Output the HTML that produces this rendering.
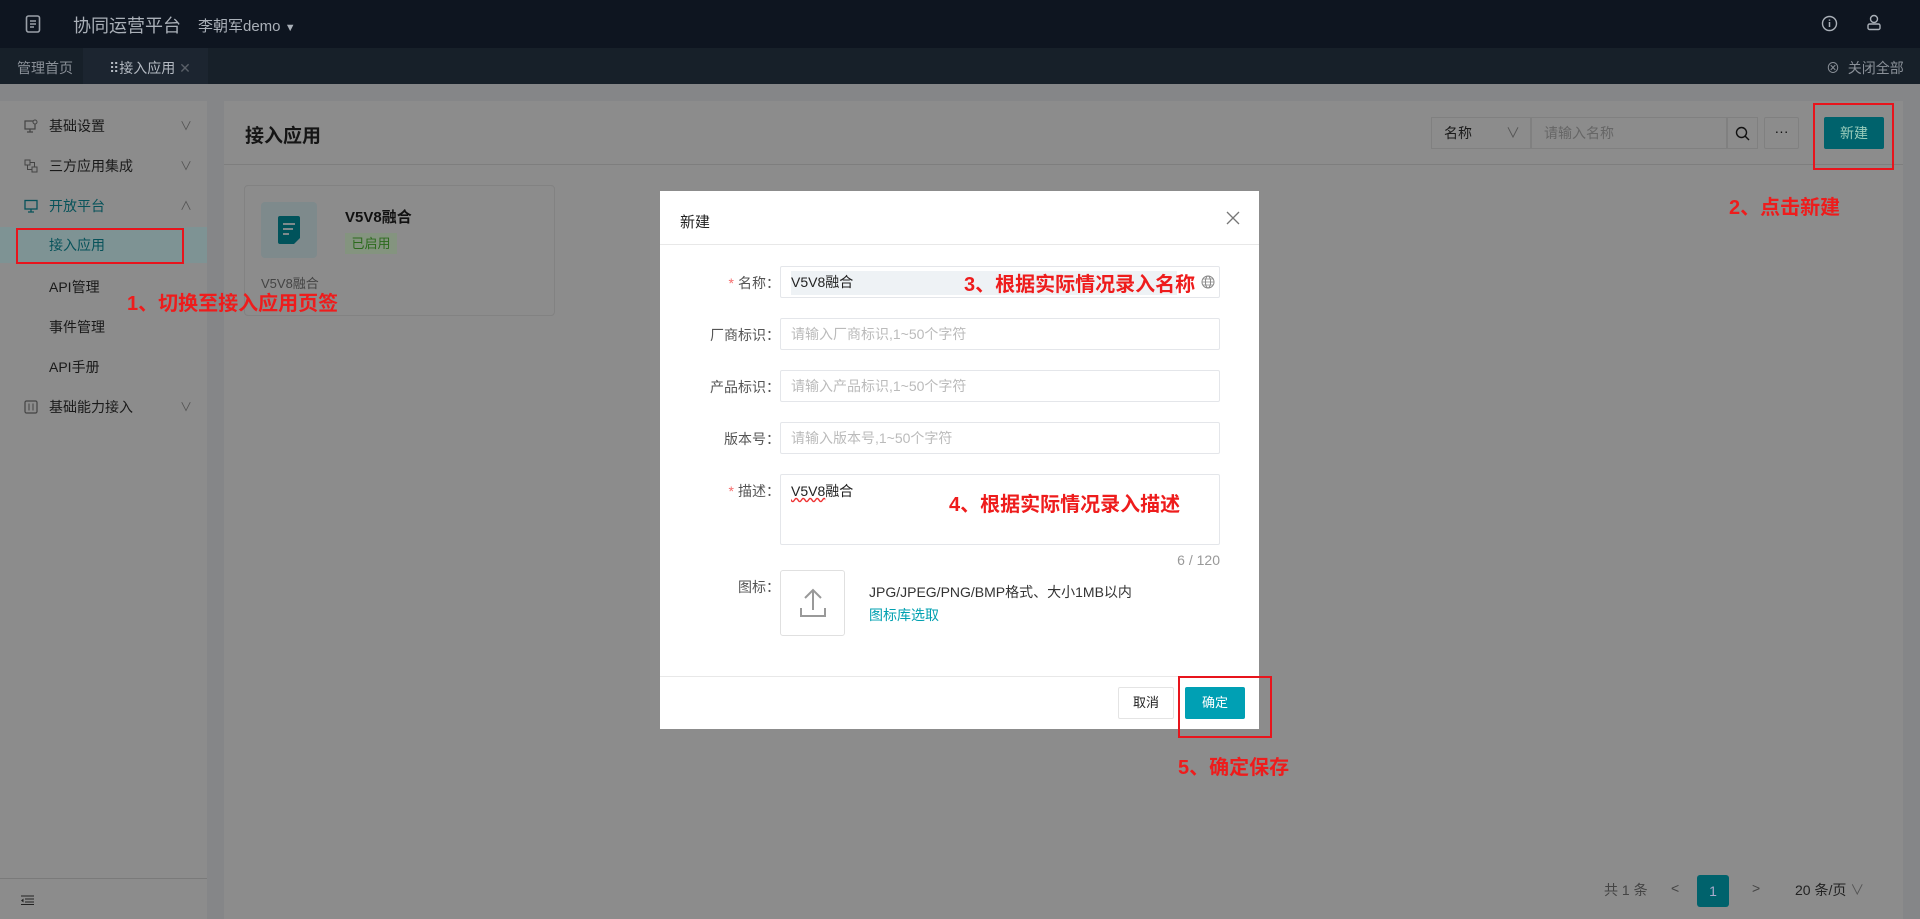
<!DOCTYPE html>
<html><head><meta charset="utf-8">
<style>
*{margin:0;padding:0;box-sizing:border-box}
body{width:1920px;height:919px;overflow:hidden;background:#858688;font-family:"Liberation Sans","Noto Sans CJK SC",sans-serif;font-size:14px;color:#222;position:relative}
.abs{position:absolute}
.hdr{left:0;top:0;width:1920px;height:48px;background:#0e1520}
.tabs{left:0;top:48px;width:1920px;height:36px;background:#172029}
.side{left:0;top:101px;width:207px;height:818px;background:#8c8c8c}
.panel{left:224px;top:101px;width:1679px;height:818px;background:#8c8c8c}
.mi{position:absolute;left:0;width:207px;height:40px;line-height:40px;color:#1a1a1a;font-size:14px}
.mi .t{position:absolute;left:49px}
.mi .ch{position:absolute;left:180px;top:0;color:#555;font-size:12px}
.red{color:#ee1c1c;font-weight:bold;font-size:20px;position:absolute;white-space:nowrap}
.rbox{position:absolute;border:2px solid #e8141c}
.modal{left:660px;top:191px;width:599px;height:538px;background:#fff}
.lbl{position:absolute;right:488px;width:120px;text-align:right;color:#555;font-size:14px}
.inp{position:absolute;left:120px;width:440px;height:32px;border:1px solid #e4e6ea;border-radius:2px;color:#bbb;font-size:14px;line-height:30px;padding-left:10px}
.star{color:#f56c6c;margin-right:4px}
</style></head><body>
<div class="abs hdr">
  <svg class="abs" style="left:25px;top:15px" width="16" height="18" viewBox="0 0 16 18"><rect x="1.5" y="1" width="13" height="16" rx="2" fill="none" stroke="#9aa0a8" stroke-width="1.6"/><path d="M5 6h6M5 9h6M5 12h4" stroke="#9aa0a8" stroke-width="1.4"/></svg>
  <div class="abs" style="left:73px;top:12px;font-size:18px;color:#aab0b8">协同运营平台</div>
  <div class="abs" style="left:198px;top:15px;font-size:15px;color:#aab0b8">李朝军demo <span style="font-size:11px">▼</span></div>
  <svg class="abs" style="left:1821px;top:15px" width="17" height="17" viewBox="0 0 17 17"><circle cx="8.5" cy="8.5" r="7" fill="none" stroke="#aab0b8" stroke-width="1.4"/><path d="M8.5 7v5M8.5 4.5v1.2" stroke="#aab0b8" stroke-width="1.5"/></svg>
  <svg class="abs" style="left:1866px;top:14px" width="16" height="17" viewBox="0 0 16 17"><circle cx="8" cy="5" r="3.5" fill="none" stroke="#aab0b8" stroke-width="1.4"/><rect x="2" y="10" width="12" height="5.5" rx="1.5" fill="none" stroke="#aab0b8" stroke-width="1.4"/></svg>
</div>
<div class="abs tabs">
  <div class="abs" style="left:17px;top:10px;font-size:14px;color:#8a9098">管理首页</div>
  <div class="abs" style="left:83px;top:0;width:125px;height:36px;background:#1c2530"></div>
  <div class="abs" style="left:109px;top:10px;font-size:14px;color:#b4bac2">⠿接入应用 <span style="color:#5a6068">✕</span></div>
  <div class="abs" style="left:1826px;top:10px;font-size:14px;color:#8a9098">⊗ &nbsp;关闭全部</div>
</div>
<div class="abs side">
  <div class="mi" style="top:5px"><svg class="abs" style="left:24px;top:13px" width="14" height="14" viewBox="0 0 14 14"><rect x="1" y="2" width="10" height="8" fill="none" stroke="#444" stroke-width="1.2"/><path d="M6 10v3M3 13h6" stroke="#444" stroke-width="1.2"/><circle cx="11" cy="3" r="2" fill="#8c8c8c" stroke="#444"/></svg><span class="t">基础设置</span><span class="ch">∨</span></div>
  <div class="mi" style="top:45px"><svg class="abs" style="left:24px;top:13px" width="14" height="14" viewBox="0 0 14 14"><rect x="1" y="1" width="5" height="5" fill="none" stroke="#444"/><rect x="8" y="8" width="5" height="5" fill="none" stroke="#444"/><path d="M3.5 6v4.5H8M6 3.5h4.5V8" stroke="#444" fill="none"/></svg><span class="t">三方应用集成</span><span class="ch">∨</span></div>
  <div class="mi" style="top:85px;color:#07525a"><svg class="abs" style="left:24px;top:13px" width="14" height="14" viewBox="0 0 14 14"><rect x="1" y="1.5" width="12" height="8.5" fill="none" stroke="#07525a" stroke-width="1.3"/><path d="M7 10v3M4 13h6" stroke="#07525a" stroke-width="1.3"/></svg><span class="t">开放平台</span><span class="ch">∧</span></div>
  <div class="mi" style="top:126px;height:36px;line-height:36px;background:#7e9394;color:#07525a"><span class="t">接入应用</span></div>
  <div class="mi" style="top:166px"><span class="t">API管理</span></div>
  <div class="mi" style="top:206px"><span class="t">事件管理</span></div>
  <div class="mi" style="top:246px"><span class="t">API手册</span></div>
  <div class="mi" style="top:286px"><svg class="abs" style="left:24px;top:13px" width="14" height="14" viewBox="0 0 14 14"><rect x="1" y="1" width="12" height="12" rx="1.5" fill="none" stroke="#444" stroke-width="1.2"/><path d="M5 3.5v7M9 3.5v7" stroke="#444"/></svg><span class="t">基础能力接入</span><span class="ch">∨</span></div>
  <div class="abs" style="left:0;top:777px;width:207px;height:1px;background:#7a7a7a"></div>
  <svg class="abs" style="left:21px;top:794px" width="13" height="10" viewBox="0 0 13 10"><path d="M0 1h13M4 4h9M4 7h9M0 9.5h13" stroke="#222" stroke-width="1"/><path d="M0 5.5l2.5-2v4z" fill="#222"/></svg>
</div>

<div class="abs panel">
  <div class="abs" style="left:21px;top:20px;font-size:19px;font-weight:bold;color:#151515">接入应用</div>
  <div class="abs" style="left:0;top:63px;width:1679px;height:1px;background:#7e7e7e"></div>
  <div class="abs" style="left:1207px;top:16px;width:100px;height:32px;border:1px solid #808080;background:#8c8c8c;line-height:30px;padding-left:12px;color:#1a1a1a">名称<span style="position:absolute;right:10px;color:#555">∨</span></div>
  <div class="abs" style="left:1307px;top:16px;width:196px;height:32px;border:1px solid #808080;line-height:30px;padding-left:12px;color:#666">请输入名称</div>
  <div class="abs" style="left:1503px;top:16px;width:31px;height:32px;border:1px solid #808080"><svg class="abs" style="left:7px;top:8px" width="15" height="15" viewBox="0 0 15 15"><circle cx="6.5" cy="6.5" r="5" fill="none" stroke="#111" stroke-width="1.4"/><path d="M10 10l4 4" stroke="#111" stroke-width="1.4"/></svg></div>
  <div class="abs" style="left:1540px;top:16px;width:35px;height:32px;border:1px solid #808080;border-radius:2px;text-align:center;line-height:26px;color:#111">···</div>
  <div class="abs" style="left:1600px;top:16px;width:60px;height:32px;background:#00626c;border-radius:2px;text-align:center;line-height:32px;color:#9cb">新建</div>
  <div class="abs" style="left:20px;top:84px;width:311px;height:131px;border:1px solid #828282;border-radius:4px">
    <div class="abs" style="left:16px;top:16px;width:56px;height:56px;background:#7e8a8c;border-radius:4px"><svg class="abs" style="left:17px;top:14px" width="22" height="28" viewBox="0 0 22 28"><path d="M2 0h18a2 2 0 012 2v20l-6 6H2a2 2 0 01-2-2V2a2 2 0 012-2z" fill="#00535b"/><path d="M5 8h12M5 13h10M5 18h6" stroke="#7e8a8c" stroke-width="2"/></svg></div>
    <div class="abs" style="left:100px;top:20px;font-weight:bold;font-size:15px;color:#111">V5V8融合</div>
    <div class="abs" style="left:100px;top:47px;width:52px;height:21px;background:#84947f;color:#2b6a1c;font-size:13px;line-height:21px;text-align:center">已启用</div>
    <div class="abs" style="left:16px;top:87px;font-size:13px;color:#444">V5V8融合</div>
  </div>
  <div class="abs" style="left:1380px;top:779px;color:#444">共 1 条</div>
  <div class="abs" style="left:1447px;top:779px;color:#444">&lt;</div>
  <div class="abs" style="left:1473px;top:774px;width:32px;height:32px;background:#00626c;border-radius:3px;color:#aac;text-align:center;line-height:32px">1</div>
  <div class="abs" style="left:1528px;top:779px;color:#444">&gt;</div>
  <div class="abs" style="left:1571px;top:779px;color:#222">20 条/页 <span style="color:#555">∨</span></div>
</div>
<div class="rbox" style="left:16px;top:228px;width:168px;height:36px"></div>
<div class="red" style="left:127px;top:287px">1、切换至接入应用页签</div>
<div class="rbox" style="left:1813px;top:103px;width:81px;height:67px"></div>
<div class="red" style="left:1729px;top:191px">2、点击新建</div>

<div class="abs modal">
  <div class="abs" style="left:20px;top:20px;font-size:15px;color:#222">新建</div>
  <svg class="abs" style="left:566px;top:20px" width="14" height="14" viewBox="0 0 14 14"><path d="M1 1l12 12M13 1L1 13" stroke="#777" stroke-width="1.3"/></svg>
  <div class="abs" style="left:0;top:53px;width:599px;height:1px;background:#e8e8e8"></div>
  <div class="lbl" style="top:82px;left:0"><span class="star">*</span>名称：</div>
  <div class="inp" style="top:75px;color:#222;padding-left:0"><div class="abs" style="left:10px;top:4px;width:386px;height:24px;background:#eef2f5"></div><span class="abs" style="left:10px;top:0">V5V8融合</span><svg class="abs" style="left:420px;top:8px" width="14" height="14" viewBox="0 0 14 14"><circle cx="7" cy="7" r="6" fill="none" stroke="#888"/><ellipse cx="7" cy="7" rx="2.6" ry="6" fill="none" stroke="#888"/><path d="M1 7h12M2 4h10M2 10h10" stroke="#888" stroke-width=".8"/></svg></div>
  <div class="lbl" style="top:134px;left:0">厂商标识：</div>
  <div class="inp" style="top:127px">请输入厂商标识,1~50个字符</div>
  <div class="lbl" style="top:186px;left:0">产品标识：</div>
  <div class="inp" style="top:179px">请输入产品标识,1~50个字符</div>
  <div class="lbl" style="top:238px;left:0">版本号：</div>
  <div class="inp" style="top:231px">请输入版本号,1~50个字符</div>
  <div class="lbl" style="top:290px;left:0"><span class="star">*</span>描述：</div>
  <div class="inp" style="top:283px;height:71px;color:#222;line-height:22px;padding-top:5px"><span style="text-decoration:underline wavy #e33;text-decoration-skip-ink:none">V5V8</span>融合</div>
  <div class="abs" style="left:460px;top:361px;width:100px;text-align:right;color:#999">6 / 120</div>
  <div class="lbl" style="top:386px;left:0">图标：</div>
  <div class="abs" style="left:120px;top:379px;width:65px;height:66px;border:1px solid #e0e0e0;border-radius:3px"><svg class="abs" style="left:19px;top:17px" width="26" height="30" viewBox="0 0 26 30"><path d="M13 22V2M5 10l8-8 8 8" fill="none" stroke="#999" stroke-width="2"/><path d="M1 20v8h24v-8" fill="none" stroke="#999" stroke-width="2"/></svg></div>
  <div class="abs" style="left:209px;top:391px;color:#333;font-size:14px">JPG/JPEG/PNG/BMP格式、大小1MB以内</div>
  <div class="abs" style="left:209px;top:414px;color:#00a0b0;font-size:14px">图标库选取</div>
  <div class="abs" style="left:0;top:485px;width:599px;height:1px;background:#e8e8e8"></div>
  <div class="abs" style="left:458px;top:496px;width:56px;height:32px;border:1px solid #e4e4e4;border-radius:2px;text-align:center;line-height:30px;color:#222;font-size:13px">取消</div>
  <div class="abs" style="left:525px;top:496px;width:60px;height:32px;background:#00a0b4;border-radius:2px;text-align:center;line-height:32px;color:#fff;font-size:13px">确定</div>
</div>
<div class="red" style="left:964px;top:268px">3、根据实际情况录入名称</div>
<div class="red" style="left:949px;top:488px">4、根据实际情况录入描述</div>
<div class="rbox" style="left:1178px;top:676px;width:94px;height:62px"></div>
<div class="red" style="left:1178px;top:751px">5、确定保存</div>
</body></html>
